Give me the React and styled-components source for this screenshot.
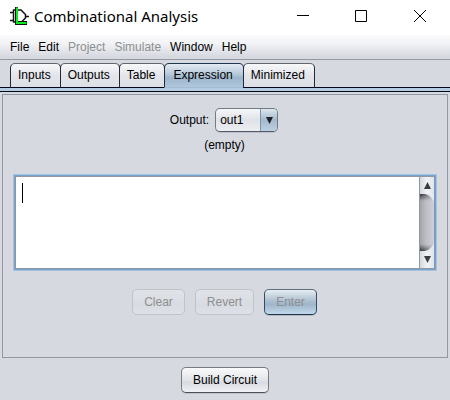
import React from "react";
import styled, { createGlobalStyle, css } from "styled-components";

const GlobalStyle = createGlobalStyle`
  * { box-sizing: border-box; }
  body {
    margin: 0;
    background: #d6d9e0;
    color: #000;
    font: 12px/16px "Liberation Sans", Arial, sans-serif;
  }
  button, select, textarea { font: inherit; color: inherit; margin: 0; }
`;

const Window = styled.div`
  display: flex;
  flex-direction: column;
  min-height: 100vh;
`;

const TitleBar = styled.header`
  display: flex;
  align-items: center;
  height: 35px;
  padding-left: 10px;
  background: #fff;
`;

const Title = styled.h1`
  flex: 1;
  margin: 0 0 3px 5px;
  font: 400 15px/20px "Noto Sans", "Segoe UI", sans-serif;
  white-space: nowrap;
`;

const GateIcon = styled.svg`
  display: block;
  width: 19px;
  height: 18px;
  margin-bottom: 3px;
`;

const WindowButton = styled.button`
  display: grid;
  place-items: center;
  width: 58px;
  height: 32px;
  margin-bottom: 3px;
  padding: 0;
  border: 0;
  background: none;

  &:last-child { width: 60px; }
`;

const MenuBar = styled.nav`
  display: flex;
  align-items: center;
  gap: 3px;
  height: 25px;
  padding: 0 7px 1px;
  border-bottom: 1px solid #9297a1;
  background: linear-gradient(#fafafb, #f2f3f6 35%, #d6d9e0 90%);
`;

const MenuButton = styled.button`
  padding: 0 3px;
  border: 0;
  background: none;
  white-space: nowrap;

  &:disabled { color: #8e8f91; }
`;

const TabStrip = styled.div`
  display: flex;
  height: 32px;
  padding: 3px 9px 0 10px;
  border-bottom: 1px solid #05051c;
  background: linear-gradient(#d6d9e0 0 27px, #05051c 27px 28px, #b4cce1 28px);
`;

const Tab = styled.button`
  height: 25px;
  margin-right: -1px;
  padding: 0 9px 1px 7px;
  border: 1px solid #23283a;
  border-top-color: #62666f;
  border-bottom-color: #05051c;
  border-radius: 5px 5px 0 0;
  background: linear-gradient(#f7f8fa, #e3e5ea 50%, #dcdfe5);
  white-space: nowrap;

  ${({ $active }) => $active && css`
    padding: 0 10px 1px 8px;
    border-top-color: #20364d;
    border-bottom-color: #a4bbd0;
    background: linear-gradient(#e2ebf2, #b5c8d9 45%, #9db4ca 60%, #b0c8dd);
  `}
`;

const Panel = styled.main`
  display: flex;
  flex: 1;
  flex-direction: column;
  align-items: center;
  margin: 2px 2px 0;
  padding: 13px 11px 42px 10px;
  border: 1px solid #9297a1;
`;

const OutputRow = styled.div`
  display: flex;
  align-items: center;
  gap: 6px;
  padding-right: 1px;
`;

const Combo = styled.div`
  display: grid;
  grid-template-columns: 1fr 17px;
  width: 63px;
  height: 24px;
  border: 1px solid #747982;
  border-bottom-color: #555a64;
  border-radius: 5px;
  background: linear-gradient(#f6f7f9, #dfe2e7 50%, #eceef1);
  box-shadow: 0 1px 0 #bcc1c9;
  overflow: hidden;
`;

const ComboSelect = styled.select`
  grid-area: 1 / 1 / 2 / 3;
  appearance: none;
  padding: 0 4px;
  border: 0;
  background: none;
  outline: 0;
`;

const ComboArrow = styled.span`
  display: grid;
  grid-area: 1 / 2;
  place-items: center;
  border-left: 1px solid #7d95ab;
  background: linear-gradient(#dbe6ee, #a5bacd 50%, #bad0e2);
  pointer-events: none;
`;

const Status = styled.p`
  margin: 5px 0 21px;
`;

const Editor = styled.div`
  position: relative;
  display: flex;
  flex: 1;
  align-self: stretch;
  min-height: 96px;
  margin-right: -1px;
  border: 1px solid #a9c2da;
  border-radius: 1px;
  background: #73a4d1;
  padding: 1px;
`;

const ExpressionInput = styled.textarea`
  flex: 1;
  min-width: 0;
  padding: 6px;
  border: 1px solid #9297a1;
  border-right: 0;
  background: #fff;
  caret-color: transparent;
  outline: 0;
  resize: none;
`;

const Caret = styled.span`
  position: absolute;
  top: 8px;
  left: 8px;
  width: 1px;
  height: 20px;
  background: #000;
`;

const ScrollBar = styled.div`
  display: flex;
  flex-direction: column;
  width: 16px;
  border: 1px solid #9297a1;
  border-right-color: #8499b0;
  background: #e5e9ed;
`;

const ScrollButton = styled.button`
  display: grid;
  place-items: center;
  width: 100%;
  height: 17px;
  padding: 0;
  border: 0;
  background: linear-gradient(90deg, #d3d8de, #f0f4f6 50%, #dfe4e8);
`;

const ScrollTrack = styled.svg`
  display: block;
  flex: 1;
  width: 100%;
  min-height: 0;
`;

const Actions = styled.div`
  display: flex;
  gap: 10px;
  margin-top: 18px;
`;

const Button = styled.button`
  height: 26px;
  padding: 0 11px 1px;
  border: 1px solid #777b84;
  border-bottom-color: #4b4f59;
  border-radius: 5px;
  background: linear-gradient(#fafafb, #e5e7eb 45%, #d8dbe2 60%, #f0f1f5);
  box-shadow: 0 1px 0 #bec2ca;
  white-space: nowrap;

  &:disabled {
    border-color: #bfc3ca;
    background: linear-gradient(#e0e3e8, #d8dbe1 60%, #dde0e6);
    color: #8e8f91;
    box-shadow: none;
  }

  ${({ $primary }) => $primary && css`
    &:disabled {
      border-color: #5e6f7f #344b61 #1d3349;
      background: linear-gradient(#e6edf2, #adc0d1 45%, #9fb5c9 60%, #c2d9eb);
      box-shadow: 0 1px 0 #b3bac4;
    }
  `}
`;

const Footer = styled.footer`
  display: flex;
  justify-content: center;
  padding: 9px 0 7px;
`;

const menus = [
  { label: "File" },
  { label: "Edit" },
  { label: "Project", disabled: true },
  { label: "Simulate", disabled: true },
  { label: "Window" },
  { label: "Help" },
];

const tabs = ["Inputs", "Outputs", "Table", "Expression", "Minimized"];

const Triangle = ({ up = false }) => (
  <svg width="7" height="7" viewBox="0 0 7 7" aria-hidden="true">
    <path d={up ? "M3.5 0 7 7H0Z" : "M0 0H7L3.5 7Z"} fill="#3a3d42" />
  </svg>
);

export default function App() {
  return (
    <>
      <GlobalStyle />
      <Window>
        <TitleBar>
          <GateIcon viewBox="0 0 19 18" aria-hidden="true">
            <path d="M0 5.5H3M0 13.5H3M3.5 2.5V15.5M3 3H11L15.5 7.5V11L11.5 15H3M15.5 9.5H19" fill="none" stroke="#111" strokeWidth="1.5" />
            <path d="M5 0H8V14H17V18H5Z" fill="#111" />
            <path d="M6 0.5H8V15H16.5V17H6Z" fill="#0bea1d" />
          </GateIcon>
          <Title>Combinational Analysis</Title>
          <WindowButton aria-label="Minimize">
            <svg width="12" height="12"><path d="M0 5.5H12" stroke="#000" /></svg>
          </WindowButton>
          <WindowButton aria-label="Maximize">
            <svg width="12" height="12"><path d="M.5.5H11.5V11.5H.5Z" fill="none" stroke="#000" /></svg>
          </WindowButton>
          <WindowButton aria-label="Close">
            <svg width="12" height="12"><path d="M0 0 12 12M12 0 0 12" stroke="#000" /></svg>
          </WindowButton>
        </TitleBar>
        <MenuBar>
          {menus.map(({ label, disabled }) => (
            <MenuButton key={label} disabled={disabled}>{label}</MenuButton>
          ))}
        </MenuBar>
        <TabStrip role="tablist">
          {tabs.map((label) => (
            <Tab key={label} role="tab" aria-selected={label === "Expression"} $active={label === "Expression"}>
              {label}
            </Tab>
          ))}
        </TabStrip>
        <Panel>
          <OutputRow>
            <label htmlFor="output">Output:</label>
            <Combo>
              <ComboSelect id="output"><option>out1</option></ComboSelect>
              <ComboArrow>
                <svg width="7" height="7" viewBox="0 0 7 7" aria-hidden="true">
                  <path d="M0 0H7L3.5 7Z" fill="#1c222b" />
                </svg>
              </ComboArrow>
            </Combo>
          </OutputRow>
          <Status>(empty)</Status>
          <Editor>
            <ExpressionInput aria-label="Expression" />
            <Caret />
            <ScrollBar>
              <ScrollButton aria-label="Scroll up"><Triangle up /></ScrollButton>
              <ScrollTrack viewBox="0 0 15 58" preserveAspectRatio="none" aria-hidden="true">
                <defs>
                  <linearGradient id="track">
                    <stop offset="0" stopColor="#a2a3aa" />
                    <stop offset=".4" stopColor="#bcbdc4" />
                    <stop offset="1" stopColor="#cfd0d7" />
                  </linearGradient>
                  <linearGradient id="ends" x2="0" y2="1">
                    <stop offset="0" stopColor="#303136" />
                    <stop offset=".12" stopColor="#303136" stopOpacity="0" />
                    <stop offset=".88" stopColor="#303136" stopOpacity="0" />
                    <stop offset="1" stopColor="#303136" />
                  </linearGradient>
                  <linearGradient id="fade">
                    <stop offset="0" stopColor="#fff" />
                    <stop offset="1" stopColor="#fff" stopOpacity=".1" />
                  </linearGradient>
                  <mask id="side"><rect width="15" height="58" fill="url(#fade)" /></mask>
                </defs>
                <path d="M0 0H5Q11 1 15 8V50Q11 57 5 58H0Z" fill="url(#track)" />
                <path d="M0 0H5Q11 1 15 8V50Q11 57 5 58H0Z" fill="url(#ends)" mask="url(#side)" />
              </ScrollTrack>
              <ScrollButton aria-label="Scroll down"><Triangle /></ScrollButton>
            </ScrollBar>
          </Editor>
          <Actions>
            <Button disabled>Clear</Button>
            <Button disabled>Revert</Button>
            <Button disabled $primary>Enter</Button>
          </Actions>
        </Panel>
        <Footer><Button>Build Circuit</Button></Footer>
      </Window>
    </>
  );
}
